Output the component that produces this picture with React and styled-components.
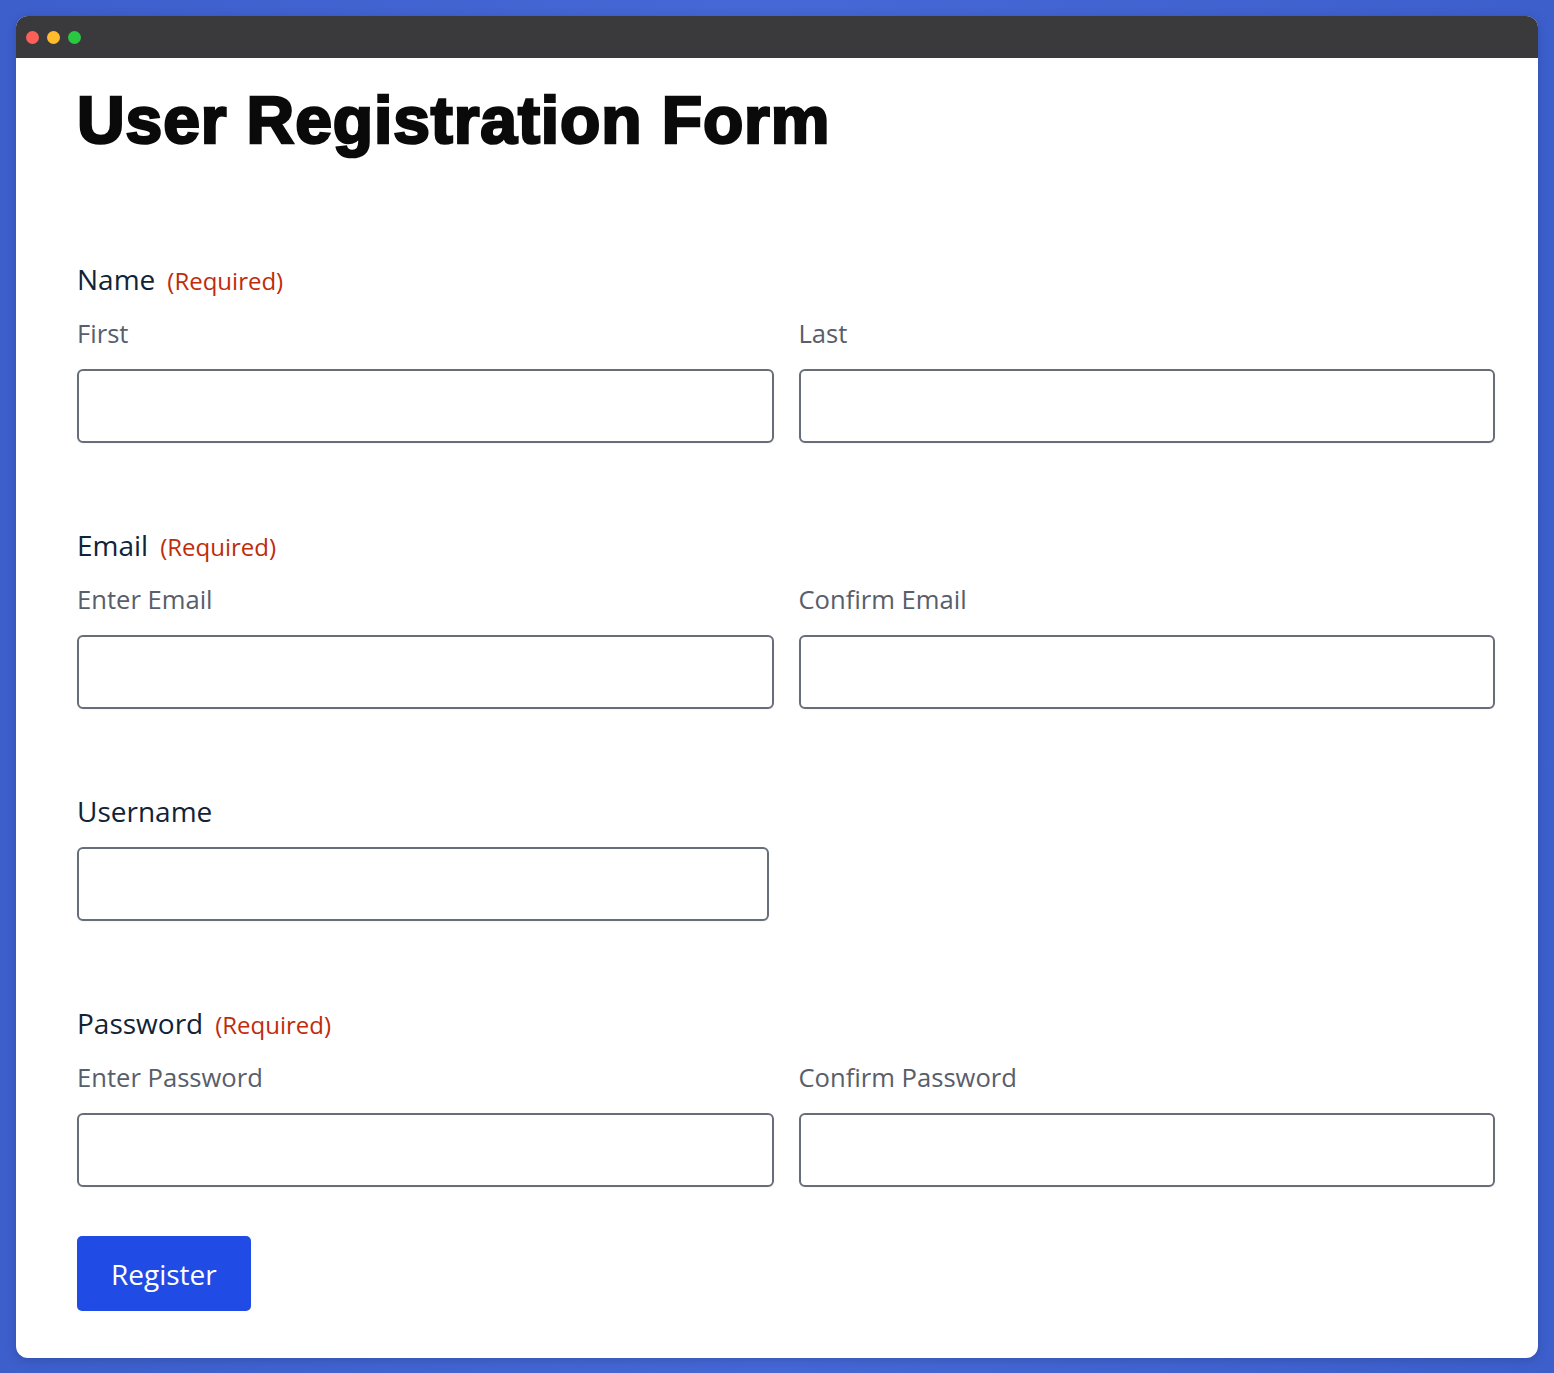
import styled, { createGlobalStyle } from "styled-components";

const GlobalStyle = createGlobalStyle`
  * {
    box-sizing: border-box;
  }
  body {
    margin: 0;
    background: linear-gradient(90deg, #3d5fcc 0%, #4568d6 50%, #3d5fcc 100%);
    font-family: "Open Sans", "Liberation Sans", sans-serif;
  }
`;

const Page = styled.div`
  padding: 16px 16px 15px 16px;
  min-height: 1373px;
`;

const Window = styled.div`
  background: #ffffff;
  border-radius: 12px;
  overflow: hidden;
  box-shadow: 0 2px 10px rgba(20, 30, 80, 0.25);
`;

const TitleBar = styled.div`
  height: 42px;
  background: #3a3a3c;
  display: flex;
  align-items: center;
  gap: 8px;
  padding: 0 0 0 10px;
`;

const Dot = styled.span`
  width: 13px;
  height: 13px;
  border-radius: 50%;
  background: ${({ color }) => color};
`;

const Content = styled.div`
  padding: 29px 43px 47px 61px;
`;

const Title = styled.h1`
  margin: 0 0 109px;
  font-family: "Liberation Sans", Arial, sans-serif;
  font-weight: 700;
  font-size: 66px;
  line-height: 66px;
  letter-spacing: 0.9px;
  color: #0a0a0a;
  -webkit-text-stroke: 2.6px #0a0a0a;
`;

const Form = styled.form`
  display: flex;
  flex-direction: column;
  gap: 85px;
`;

const Field = styled.div`
  display: flex;
  flex-direction: column;
  gap: 19px;
`;

const Label = styled.div`
  font-size: 28px;
  line-height: 34px;
  color: #112337;
  display: flex;
  align-items: baseline;
  gap: 12px;
`;

const Required = styled.span`
  font-size: 24px;
  color: #c02b0a;
`;

const Row = styled.div`
  display: grid;
  grid-template-columns: 1fr 1fr;
  column-gap: 25px;
`;

const Column = styled.div`
  display: flex;
  flex-direction: column;
  gap: 18px;
`;

const SubLabel = styled.div`
  font-size: 25.6px;
  line-height: 34px;
  color: #585e6a;
`;

const Input = styled.input`
  display: block;
  width: ${({ $width }) => $width || "100%"};
  height: 74px;
  border: 2px solid #686e77;
  border-radius: 6px;
  background: #fff;
  font-family: inherit;
  font-size: 24px;
  padding: 0 16px;
  outline: none;
  box-shadow: 0 1px 2px rgba(0, 0, 0, 0.04);
`;

const Button = styled.button`
  align-self: flex-start;
  margin-top: 49px;
  height: 75px;
  padding: 0 34px;
  border: none;
  border-radius: 5px;
  background: #204ce5;
  color: #fff;
  font-family: "Open Sans", sans-serif;
  font-size: 28px;
  cursor: pointer;
`;

const Footer = styled.div`
  display: flex;
`;

const DoubleField = ({ label, required, left, right }) => (
  <Field>
    <Label>
      {label}
      {required && <Required>(Required)</Required>}
    </Label>
    <Row>
      <Column>
        <SubLabel>{left}</SubLabel>
        <Input type="text" />
      </Column>
      <Column>
        <SubLabel>{right}</SubLabel>
        <Input type="text" />
      </Column>
    </Row>
  </Field>
);

export default function App() {
  return (
    <>
      <GlobalStyle />
      <Page>
        <Window>
          <TitleBar>
            <Dot color="#fe5f57" />
            <Dot color="#febc2e" />
            <Dot color="#28c840" />
          </TitleBar>
          <Content>
            <Title>User Registration Form</Title>
            <Form onSubmit={(e) => e.preventDefault()}>
              <DoubleField label="Name" required left="First" right="Last" />
              <DoubleField
                label="Email"
                required
                left="Enter Email"
                right="Confirm Email"
              />
              <Field>
                <Label>Username</Label>
                <Input type="text" $width="692px" />
              </Field>
              <DoubleField
                label="Password"
                required
                left="Enter Password"
                right="Confirm Password"
              />
            </Form>
            <Footer>
              <Button type="button">Register</Button>
            </Footer>
          </Content>
        </Window>
      </Page>
    </>
  );
}
